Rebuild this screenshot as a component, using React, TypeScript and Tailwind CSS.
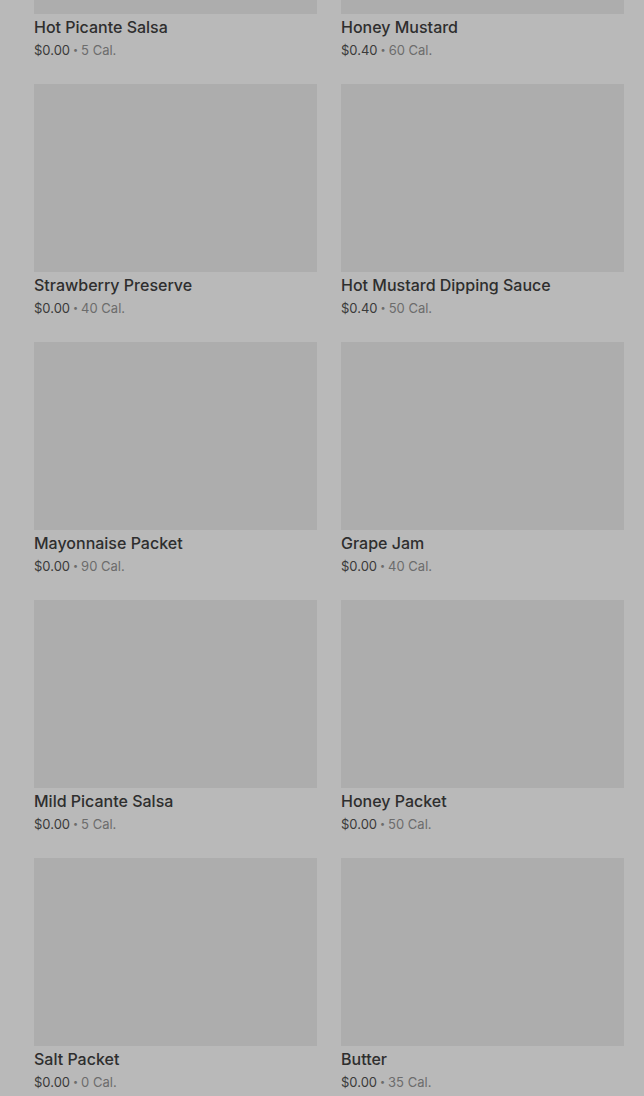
const items = [
  { name: "Hot Picante Salsa", price: "$0.00", cal: "5 Cal." },
  { name: "Honey Mustard", price: "$0.40", cal: "60 Cal." },
  { name: "Strawberry Preserve", price: "$0.00", cal: "40 Cal." },
  { name: "Hot Mustard Dipping Sauce", price: "$0.40", cal: "50 Cal." },
  { name: "Mayonnaise Packet", price: "$0.00", cal: "90 Cal." },
  { name: "Grape Jam", price: "$0.00", cal: "40 Cal." },
  { name: "Mild Picante Salsa", price: "$0.00", cal: "5 Cal." },
  { name: "Honey Packet", price: "$0.00", cal: "50 Cal." },
  { name: "Salt Packet", price: "$0.00", cal: "0 Cal." },
  { name: "Butter", price: "$0.00", cal: "35 Cal." },
];

function ItemCard({ name, price, cal }: { name: string; price: string; cal: string }) {
  return (
    <div className="flex flex-col">
      <div className="h-[188px] w-full bg-[#adadad]" />
      <div className="pt-px text-[16px] leading-6 font-medium text-[#2e2e2e]">{name}</div>
      <div className="mt-px flex items-center text-[13px] leading-5 text-[#3a3a3a]">
        <span>{price}</span>
        <span className="mx-[3px] text-[9px] text-[#6c6c6c]">•</span>
        <span className="text-[#6c6c6c]">{cal}</span>
      </div>
    </div>
  );
}

export default function App() {
  return (
    <div
      className="h-[1096px] overflow-hidden bg-[#b9b9b9]"
      style={{ fontFamily: "Inter, 'Noto Sans', sans-serif" }}
    >
      <div className="-mt-[174px] grid grid-cols-2 gap-x-6 gap-y-6 pl-[34px] pr-5">
        {items.map((it) => (
          <ItemCard key={it.name} {...it} />
        ))}
      </div>
    </div>
  );
}
